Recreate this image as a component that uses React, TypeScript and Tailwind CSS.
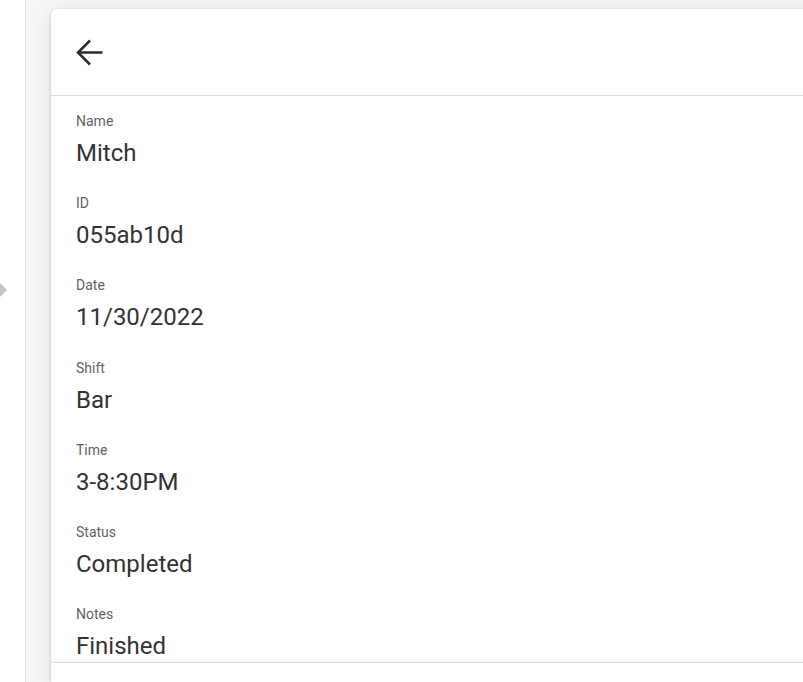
import React from "react";

const fields: { label: string; value: string }[] = [
  { label: "Name", value: "Mitch" },
  { label: "ID", value: "055ab10d" },
  { label: "Date", value: "11/30/2022" },
  { label: "Shift", value: "Bar" },
  { label: "Time", value: "3-8:30PM" },
  { label: "Status", value: "Completed" },
  { label: "Notes", value: "Finished" },
];

export default function App() {
  return (
    <div
      className="flex h-[682px] w-[803px] overflow-hidden bg-white"
      style={{ fontFamily: "Roboto, 'Liberation Sans', sans-serif" }}
    >
      <div className="relative w-[26px] shrink-0 border-r border-[#e3e3e3] bg-white">
        <div className="absolute left-0 top-[283px] h-0 w-0 border-y-[7px] border-l-[7px] border-y-transparent border-l-[#c4c4c4]" />
      </div>
      <div className="flex min-h-0 flex-1 flex-col bg-[#f6f6f6] pl-[25px] pt-[9px]">
        <div className="flex min-h-0 w-[800px] flex-1 flex-col overflow-hidden rounded-tl-[6px] bg-white shadow-[0_1px_3px_rgba(0,0,0,0.18),0_4px_20px_rgba(0,0,0,0.10)]">
          <div className="flex h-[87px] shrink-0 items-center border-b border-[#dedede] pl-[24px]">
            <svg width="28" height="27" viewBox="0 0 28 27" fill="none" className="ml-[1px] mt-[1px]">
              <path d="M26.5 13.5H3" stroke="#2b2b2b" strokeWidth="2.5" />
              <path d="M14 1.5L2 13.5L14 25.5" stroke="#2b2b2b" strokeWidth="2.5" />
            </svg>
          </div>
          <div className="min-h-0 flex-1 overflow-hidden pl-[25px] pt-[15px]">
            {fields.map((f) => (
              <div key={f.label} className="mb-[26.2px]">
                <div className="text-[14px] leading-[20px] text-[#5f636b]">{f.label}</div>
                <div className="mt-[8px] text-[24px] leading-[28px] text-[#333333]">{f.value}</div>
              </div>
            ))}
          </div>
          <div className="h-[20px] shrink-0 border-t border-[#dcdcdc] bg-white shadow-[0_-2px_4px_rgba(0,0,0,0.05)]" />
        </div>
      </div>
    </div>
  );
}
